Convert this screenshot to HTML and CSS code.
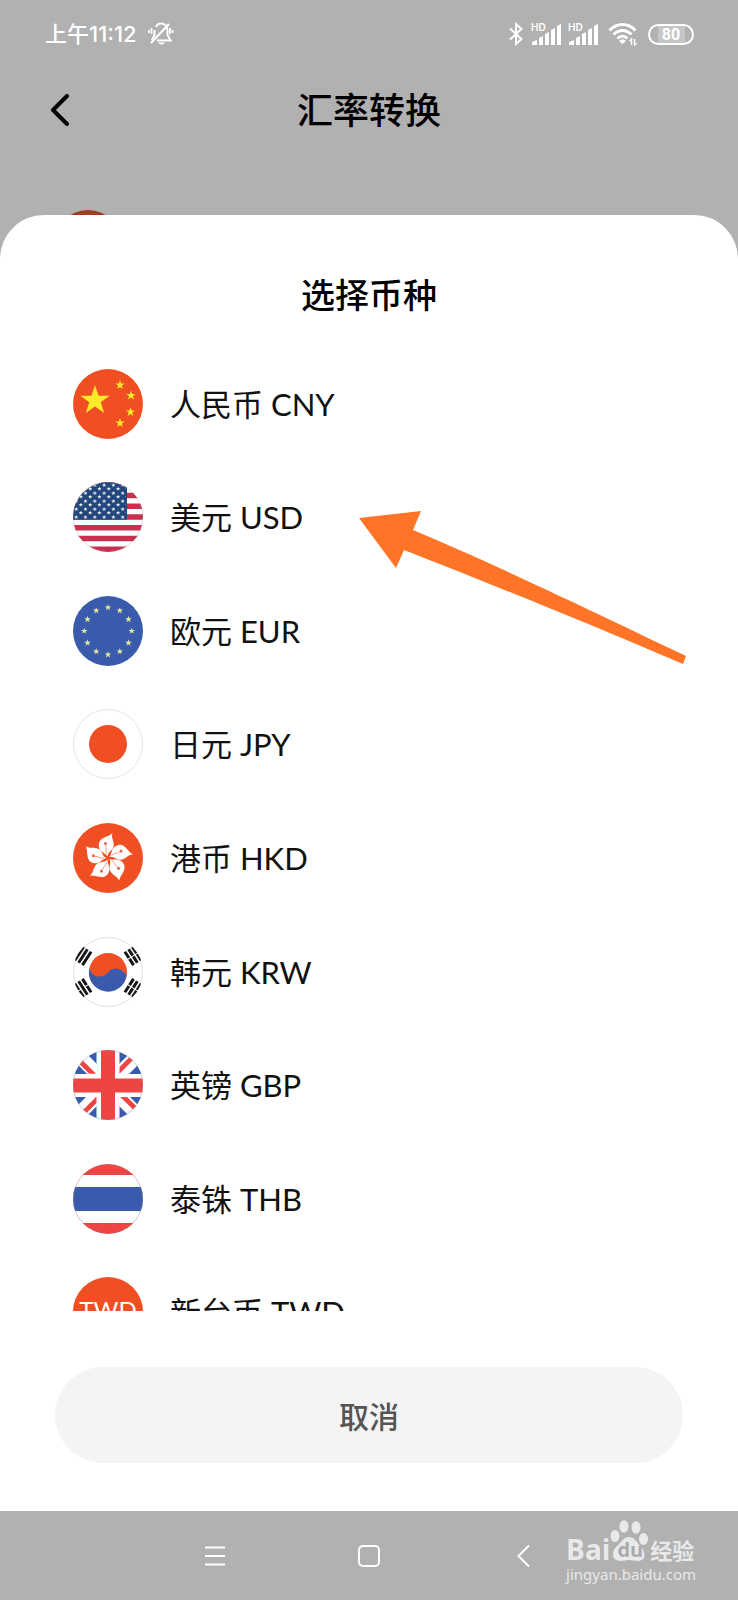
FILE: index.html
```html
<!DOCTYPE html>
<html lang="zh-CN">
<head>
<meta charset="utf-8">
<meta name="viewport" content="width=device-width, initial-scale=1">
<title>汇率转换</title>
<link rel="stylesheet" href="styles.css">
</head>
<body>
<svg class="symbols" aria-hidden="true">
  <symbol id="star" viewBox="-10 -10 20 20">
    <path d="M0-10 2.3-3.1 9.5-3.1 3.7 1.2 5.9 8.1 0 3.8-5.9 8.1-3.7 1.2-9.5-3.1-2.3-3.1Z"/>
  </symbol>
  <symbol id="signal" viewBox="0 0 29 21">
    <path d="M0 21v-3l5-2v5ZM7 21v-7l4-2v9ZM13 21v-11l4-2v13ZM19 21V6l4-2v17ZM25 21V2l4-2v21Z"/>
  </symbol>
</svg>

<div class="status-bar">
  <div class="status-group">
    <span class="clock">上午11:12</span>
    <svg class="icon-bell" viewBox="0 0 26 24" fill="none" stroke="currentColor" stroke-width="2">
      <path d="M8 5C9 2.500 11 1.500 13 1.500c4 0 6.500 3 6.500 6.500v5l3 5.500H9M6.500 8v5L4 18"/>
      <path d="M3 21 21 2" stroke-width="2.200"/>
      <path d="M10 20.500h7c-1 2.500-6 2.500-7 0Z" fill="currentColor" stroke="none"/>
      <path d="M3.500 6v6M1 8v3M22 6v6M24.500 8v3" stroke-width="1.800"/>
    </svg>
  </div>
  <div class="status-group status-right">
    <svg class="icon-bt" viewBox="0 0 16 24" fill="none" stroke="currentColor" stroke-width="2"><path d="M2 6.500 13.500 17 8 22V2l5.500 5L2 17.500"/></svg>
    <span class="signal"><svg viewBox="0 0 29 21" fill="currentColor"><use href="#signal"/></svg><span class="hd">HD</span></span>
    <span class="signal"><svg viewBox="0 0 29 21" fill="currentColor"><use href="#signal"/></svg><span class="hd">HD</span></span>
    <svg class="icon-wifi" viewBox="0 0 30 24" fill="none" stroke="currentColor" stroke-width="3">
      <path d="M1.500 8.500C9 .500 20 .500 27.500 8.500M5.500 12.500c5.500-5.500 12.500-5.500 18 0M9.500 16.500c3-3 7-3 10 0"/>
      <path d="M11 19c2-2 5-2 7 0l-3.500 3Z" fill="currentColor" stroke="none"/>
      <path d="M23.500 23v-6l-2 2M26.500 17v6l2-2" stroke-width="1.400"/>
    </svg>
    <span class="battery">80</span>
  </div>
</div>

<header class="app-header">
  <button class="back" type="button" aria-label="返回">
    <svg viewBox="0 0 20 32" fill="none" stroke="currentColor" stroke-width="4" stroke-linecap="round" stroke-linejoin="round"><path d="M17 2 3 16l14 14"/></svg>
  </button>
  <h1>汇率转换</h1>
</header>
<div class="converter"><span class="converter-flag"></span></div>

<main class="sheet">
  <h2>选择币种</h2>
  <div class="list-window">
    <ul class="currencies">
      <li><button type="button">
        <svg class="flag" viewBox="0 0 70 70"><circle cx="35" cy="35" r="35" fill="#f04e23"/>
          <g fill="#ffe92b"><use href="#star" x="6.500" y="16" width="31" height="31"/><use href="#star" x="42" y="11" width="10" height="10"/><use href="#star" x="53" y="21.500" width="10" height="10"/><use href="#star" x="52.500" y="38" width="10" height="10"/><use href="#star" x="42" y="49" width="10" height="10"/></g></svg>
        <span>人民币 CNY</span></button></li>
      <li><button type="button">
        <svg class="flag" viewBox="0 0 70 70">
          <defs><clipPath id="disc"><circle cx="35" cy="35" r="35"/></clipPath>
          <pattern id="stars" x="1" y="1" width="9.300" height="8" patternUnits="userSpaceOnUse"><use href="#star" x="0" y="0" width="4.400" height="4.400"/><use href="#star" x="4.650" y="3.600" width="4.400" height="4.400"/></pattern></defs>
          <g clip-path="url(#disc)"><rect width="70" height="70" fill="#fff"/>
          <path d="M0 2.700h70M0 13.460h70M0 24.230h70M0 35h70M0 45.770h70M0 56.540h70M0 67.310h70" stroke="#c9304f" stroke-width="5.380"/>
          <rect width="54" height="37.700" fill="#24467f"/><rect width="53" height="37" fill="url(#stars)"/></g>
          <circle cx="35" cy="35" r="34.500" fill="none" stroke="#888" stroke-opacity=".25"/></svg>
        <span>美元 USD</span></button></li>
      <li><button type="button">
        <svg class="flag" viewBox="0 0 70 70"><circle cx="35" cy="35" r="35" fill="#3a5bab"/>
          <g fill="#e3eb9c"><use href="#star" x="31.500" y="8" width="7" height="7"/><use href="#star" x="43.300" y="11.200" width="7" height="7"/><use href="#star" x="52" y="19.800" width="7" height="7"/><use href="#star" x="55.200" y="31.500" width="7" height="7"/><use href="#star" x="52" y="43.300" width="7" height="7"/><use href="#star" x="43.300" y="52" width="7" height="7"/><use href="#star" x="31.500" y="55.200" width="7" height="7"/><use href="#star" x="19.700" y="52" width="7" height="7"/><use href="#star" x="11" y="43.300" width="7" height="7"/><use href="#star" x="7.800" y="31.500" width="7" height="7"/><use href="#star" x="11" y="19.800" width="7" height="7"/><use href="#star" x="19.700" y="11.200" width="7" height="7"/></g></svg>
        <span>欧元 EUR</span></button></li>
      <li><button type="button">
        <svg class="flag" viewBox="0 0 70 70"><circle cx="35" cy="35" r="34.500" fill="#fff" stroke="#e2e2e2"/><circle cx="35" cy="35" r="19" fill="#f04e23"/></svg>
        <span>日元 JPY</span></button></li>
      <li><button type="button">
        <svg class="flag" viewBox="0 0 70 70">
          <defs><g id="petal"><path d="M34.500 33.500C32.500 29.500 25 29 25.800 21C26.500 14 35 14.500 39.500 10C37.500 15 42 18 40.500 24C39.500 28 34.500 29 34.500 33.500Z" fill="#fff"/><circle cx="32.500" cy="20.500" r="1.500" fill="#d96a4a"/><path d="M32.500 22c1.500 3-.5 6 1 9" fill="none" stroke="#f04e23" stroke-width=".5"/></g></defs>
          <circle cx="35" cy="35" r="35" fill="#f04e23"/>
          <use href="#petal"/><use href="#petal" transform="rotate(72 35 35)"/><use href="#petal" transform="rotate(144 35 35)"/><use href="#petal" transform="rotate(216 35 35)"/><use href="#petal" transform="rotate(288 35 35)"/></svg>
        <span>港币 HKD</span></button></li>
      <li><button type="button">
        <svg class="flag" viewBox="0 0 70 70"><circle cx="35" cy="35" r="34.500" fill="#fff" stroke="#e2e2e2"/>
          <circle cx="35" cy="35" r="19" fill="#f04e23"/><path d="M16.300 31.700A19 19 0 1 0 53.700 38.300C48 31 41 29 35.500 35C29 42 20 41 16.300 31.700Z" fill="#3a5bab"/>
          <g clip-path="url(#disc)" stroke="#151515" stroke-width="3">
            <path d="M-8-4.500H8M-8 0H8M-8 4.500H8" transform="translate(10 19) rotate(-57)"/>
            <path d="M-8-4.500h7.500M.5-4.500H8M-8 0h7.500M.5 0H8M-8 4.500h7.500M.5 4.500H8" transform="translate(60 19) rotate(57)"/>
            <path d="M-8-4.500h7.500M.5-4.500H8M-8 0H8M-8 4.500h7.500M.5 4.500H8" transform="translate(10 51) rotate(57)"/>
            <path d="M-8-4.500h7.500M.5-4.500H8M-8 0h7.500M.5 0H8M-8 4.500h7.500M.5 4.500H8" transform="translate(60 51) rotate(-57)"/>
          </g></svg>
        <span>韩元 KRW</span></button></li>
      <li><button type="button">
        <svg class="flag" viewBox="0 0 70 70"><g clip-path="url(#disc)"><rect width="70" height="70" fill="#3a5bab"/>
          <path d="M0 0 70 70M70 0 0 70" stroke="#fff" stroke-width="14"/>
          <path d="M0 7.500 16.200 23.700H23L0 .7ZM70 62.500 53.800 46.700H47L70 69.300ZM63.500 0 39.800 23.700H46.500L70 0ZM6.500 70 29.800 46.700H23.200L0 70Z" fill="#ef4444"/>
          <path d="M35 0v70" stroke="#fff" stroke-width="23"/><path d="M0 35.500h70" stroke="#fff" stroke-width="23"/>
          <path d="M35 0v70M0 35.500h70" stroke="#ef4444" stroke-width="14"/></g>
          <circle cx="35" cy="35" r="34.500" fill="none" stroke="#888" stroke-opacity=".15"/></svg>
        <span>英镑 GBP</span></button></li>
      <li><button type="button">
        <svg class="flag" viewBox="0 0 70 70"><g clip-path="url(#disc)"><rect width="70" height="70" fill="#ef4444"/><rect y="11" width="70" height="48" fill="#fff"/><rect y="23" width="70" height="24" fill="#3a5bab"/></g>
          <circle cx="35" cy="35" r="34.500" fill="none" stroke="#888" stroke-opacity=".25"/></svg>
        <span>泰铢 THB</span></button></li>
      <li><button type="button">
        <span class="flag flag-text" aria-hidden="true">TWD</span>
        <span>新台币 TWD</span></button></li>
    </ul>
  </div>
  <button class="cancel" type="button">取消</button>
  <svg class="pointer" viewBox="0 0 330 160" aria-hidden="true"><path d="M1 9 63 2 55 21C120 48 205 88 328 147L325 155C215 108 130 74 46 41L38 59Z" fill="#ff7427"/></svg>
</main>

<nav class="nav-bar">
  <button type="button" aria-label="菜单"><svg viewBox="0 0 24 24"><path d="M2 3.500h20M2 12h20M2 20.500h20"/></svg></button>
  <button type="button" aria-label="主页"><svg viewBox="0 0 24 24"><rect x="2" y="2" width="20" height="20" rx="4"/></svg></button>
  <button type="button" aria-label="返回"><svg viewBox="0 0 24 24"><path d="M18 1.500 7.500 12 18 22.500"/></svg></button>
  <div class="watermark">
    <div class="brand">
      <span class="bai">Bai</span>
      <span class="paw"><svg viewBox="0 0 40 42" fill="currentColor"><ellipse cx="5" cy="16" rx="4.500" ry="6"/><ellipse cx="14" cy="6.500" rx="4.500" ry="6.200"/><ellipse cx="26" cy="7.500" rx="4.500" ry="6.200"/><ellipse cx="33.500" cy="19" rx="4.500" ry="6"/><path d="M19 17c6 0 8 6 12 10 5 5 5 14-3 14-4 0-6-1-9-1s-5 1-9 1c-8 0-9-9-4-14 5-4 7-10 13-10Z"/></svg><span class="du">du</span></span>
      <span class="jy">经验</span>
    </div>
    <span class="site">jingyan.baidu.com</span>
  </div>
</nav>
</body>
</html>
```
FILE: styles.css
```css
* { box-sizing: border-box; }

body {
  margin: 0;
  min-height: 100vh;
  display: flex;
  flex-direction: column;
  background: #b1b1b1;
  color: #000;
  font-family: Lato, "Noto Sans CJK SC", sans-serif;
}

button {
  padding: 0;
  border: 0;
  background: none;
  color: inherit;
  font: inherit;
}

svg { display: block; }
.symbols { position: absolute; width: 0; height: 0; }
#stars { fill: #fff; }

/* Status bar */
.status-bar {
  height: 68px;
  padding: 0 44px 0 45px;
  display: flex;
  align-items: center;
  justify-content: space-between;
  color: #fff;
}
.status-group { display: flex; align-items: center; gap: 11px; }
.status-right { gap: 8px; }
.clock {
  font: 500 22px/32px Inter, "Noto Sans CJK SC", sans-serif;
}
.icon-bell { width: 26px; height: 24px; }
.icon-bt { width: 16px; height: 24px; }
.signal { position: relative; width: 29px; }
.signal svg { width: 29px; height: 21px; }
.hd {
  position: absolute;
  left: -1px;
  top: -1px;
  padding-right: 1px;
  background: #b1b1b1;
  font: 600 10px/9px Inter, sans-serif;
}
.icon-wifi { width: 30px; height: 24px; margin-left: 2px; }
.battery {
  width: 46px;
  height: 21px;
  margin-left: 2px;
  border: 2px solid #fff;
  border-radius: 11px;
  background: linear-gradient(90deg, #b1b1b1 20%, #c6c6c6 20%, #c6c6c6 84%, #b1b1b1 84%);
  font: 700 16px/17px Roboto, sans-serif;
  text-align: center;
}

/* Page behind the sheet */
.app-header {
  height: 84px;
  padding: 0 50px;
  display: grid;
  grid-template-columns: 20px 1fr 20px;
  align-items: center;
}
.app-header h1 {
  margin: 0;
  font-size: 36px;
  line-height: 48px;
  font-weight: 500;
  text-align: center;
}
.back svg { width: 20px; height: 32px; }
.converter { padding: 58px 53px 0; }
.converter-flag {
  display: block;
  width: 70px;
  height: 70px;
  border-radius: 50%;
  background: #a03c22;
}

/* Bottom sheet */
.sheet {
  position: relative;
  flex: 1;
  margin-top: -65px;
  padding: 56px 55px 48px;
  display: flex;
  flex-direction: column;
  border-radius: 44px 44px 0 0;
  background: #fff;
}
.sheet h2 {
  margin: 0 0 28px;
  font-size: 34px;
  line-height: 48px;
  font-weight: 500;
  text-align: center;
}
.list-window { height: 964px; overflow: hidden; }
.currencies {
  height: 1022px;
  margin: 0;
  padding: 0;
  display: grid;
  grid-auto-rows: 1fr;
  list-style: none;
}
.currencies li { display: flex; }
.currencies button {
  flex: 1;
  padding-left: 18px;
  display: flex;
  align-items: center;
  gap: 27px;
  color: #111;
  font-size: 31px;
  line-height: 44px;
  text-align: left;
}
.flag { flex: none; width: 70px; height: 70px; }
.flag-text {
  border-radius: 50%;
  background: #f04e23;
  color: #fff;
  font-size: 24px;
  line-height: 66px;
  text-align: center;
}
.cancel {
  height: 96px;
  margin-top: 56px;
  border-radius: 48px;
  background: #f4f4f4;
  color: #555;
  font-size: 30px;
  font-weight: 500;
}
.pointer {
  position: absolute;
  left: 358px;
  top: 294px;
  width: 330px;
  height: 160px;
}

/* System navigation */
.nav-bar {
  position: relative;
  height: 89px;
  padding: 0 203px;
  display: flex;
  align-items: center;
  justify-content: space-between;
}
.nav-bar svg {
  width: 24px;
  height: 24px;
  fill: none;
  stroke: #fff;
  stroke-width: 2;
}
.watermark {
  position: absolute;
  right: 42px;
  top: 9px;
  color: #e9e9e9;
}
.brand { display: flex; align-items: flex-end; }
.bai { font: 700 28px/26px "Open Sans", sans-serif; }
.paw { position: relative; }
.nav-bar .paw svg { width: 40px; height: 42px; fill: currentColor; stroke: none; }
.du {
  position: absolute;
  left: 0;
  right: 0;
  bottom: 0;
  color: #aaa;
  font: 700 20px/24px "Open Sans", sans-serif;
  text-align: center;
}
.jy { font: 700 22px/26px "Noto Sans CJK SC", sans-serif; }
.site { display: block; font: 400 15px/24px "Noto Sans", sans-serif; }
```
